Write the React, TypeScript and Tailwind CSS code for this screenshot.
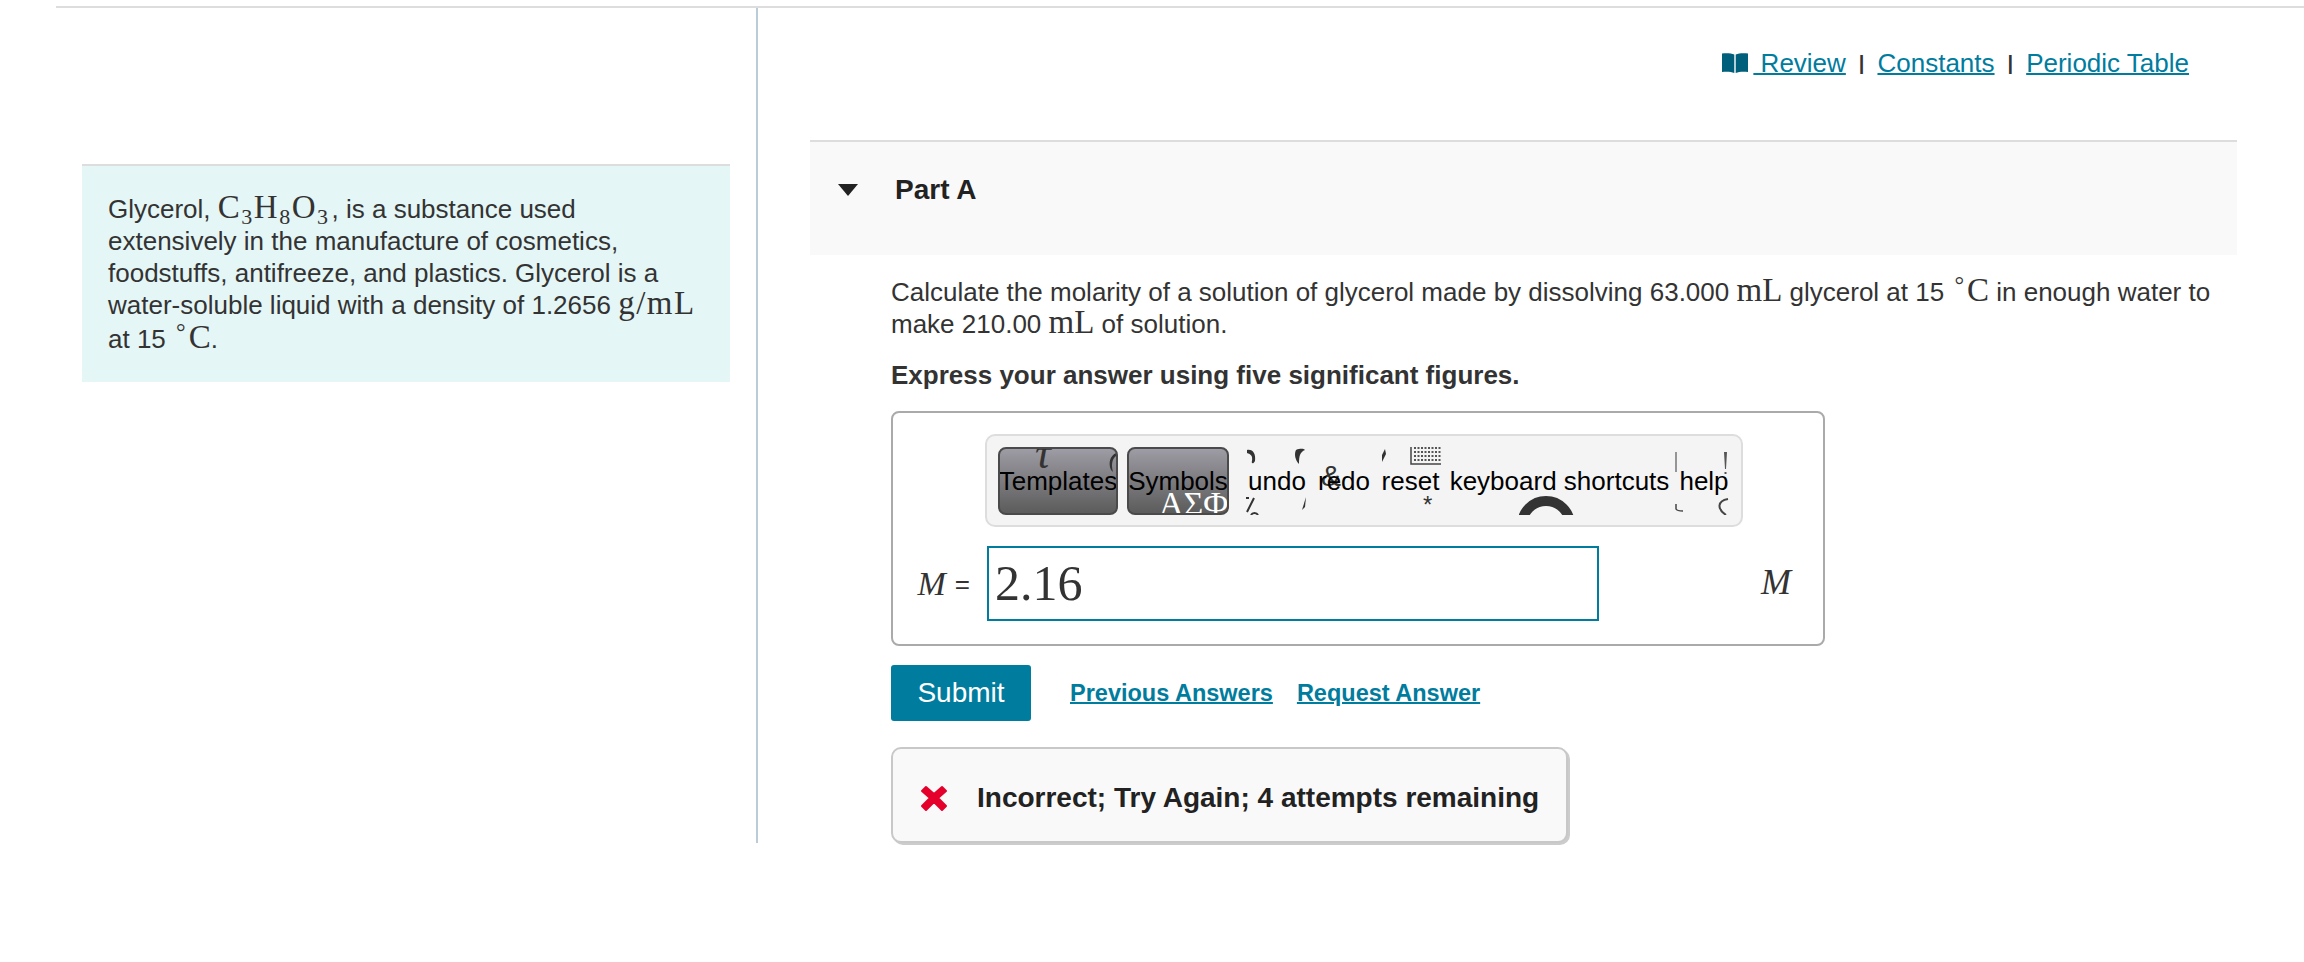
const serif = 'font-["Liberation_Serif",serif]';

function M({ children, wide }: { children: React.ReactNode; wide?: boolean }) {
  return <span className={`font-["Liberation_Serif",serif] text-[33px] leading-[24px] ${wide ? "tracking-[1.5px]" : ""}`}>{children}</span>;
}

function Sub({ children }: { children: React.ReactNode }) {
  return <span className="relative top-[6px] text-[22px] leading-none">{children}</span>;
}

function Deg() {
  return <span className="relative top-[-8px] mx-[3px] text-[24px] leading-none">°</span>;
}

function BookIcon() {
  return (
    <svg width="26" height="20" viewBox="0 0 26 20" className="mr-[5px]">
      <path d="M0 0.5C4 0 9 0 12.3 1.5V20C9 18.5 4 18.5 0 19Z" fill="#005f7a" />
      <path d="M26 0.5C22 0 17 0 13.7 1.5V20C17 18.5 22 18.5 26 19Z" fill="#005f7a" />
    </svg>
  );
}

function KeyboardIcon() {
  return (
    <svg width="32" height="18" viewBox="0 0 32 18" className="absolute left-[35px] top-0">
      <path d="M1 0V17H31" fill="none" stroke="#444" strokeWidth="1.5" />
      <path d="M4 1H31M4 5H31M4 9H31M4 13H31" stroke="#555" strokeWidth="2" strokeDasharray="2 1.5" />
    </svg>
  );
}

function ToolButton({ label, width, children }: { label: string; width: string; children: React.ReactNode }) {
  return (
    <div className={`relative flex h-[68px] ${width} items-center justify-center overflow-hidden rounded-[8px] border-2 border-[#4a4a4a] bg-gradient-to-b from-[#9e9ca4] to-[#5c5c5c] text-black`}>
      {children}
      <span className="relative">{label}</span>
    </div>
  );
}

function ToolItem({ label, width, children }: { label: string; width: string; children?: React.ReactNode }) {
  return (
    <div className={`relative flex h-[68px] ${width} shrink-0 items-center justify-center overflow-hidden text-black`}>
      {children}
      <span className="relative">{label}</span>
    </div>
  );
}

function Sep() {
  return <span className="mx-[13px] text-[20px] font-bold">|</span>;
}

export default function App() {
  return (
    <div className='min-h-[962px] bg-white pt-[6px] font-["Liberation_Sans",sans-serif] text-[26px] leading-[32px] text-[#333]'>
      <div className="ml-[56px] h-[2px] bg-[#dddddd]" />
      <div className="ml-[56px] flex">
        {/* Left column */}
        <div className="w-[702px] shrink-0 border-r-2 border-[#b9ccd8] pl-[26px] pt-[156px]">
          <div className="w-[648px] border-t-2 border-[#dddddd] bg-[#e5f6f6] px-[26px] pb-[29px] pt-[27px]">
            <p>
              Glycerol, <M wide>C<Sub>3</Sub>H<Sub>8</Sub>O<Sub>3</Sub></M><span className="ml-[2px]">,</span> is a substance used
              <br />
              extensively in the manufacture of cosmetics,
              <br />
              foodstuffs, antifreeze, and plastics. Glycerol is a
              <br />
              water-soluble liquid with a density of 1.2656 <M wide>g/mL</M>
              <br />
              <span className="relative top-[2px]">at 15 <M><Deg />C</M>.</span>
            </p>
          </div>
        </div>

        {/* Right column */}
        <div className="min-w-0 flex-1 pl-[52px] pr-[67px] pt-[39px]">
          <div className="mr-[48px] flex items-center justify-end">
            <BookIcon />
            <a className="text-[#007c9e] underline decoration-2">&nbsp;Review</a>
            <Sep />
            <a className="text-[#007c9e] underline decoration-2">Constants</a>
            <Sep />
            <a className="text-[#007c9e] underline decoration-2">Periodic Table</a>
          </div>

          <div className="mt-[61px] h-[115px] border-t-2 border-[#dddddd] bg-[#f9f9f9]">
            <div className="flex items-center pl-[28px] pt-[31px]">
              <svg width="20" height="12" viewBox="0 0 20 12">
                <path d="M0 0H20L10 12Z" fill="#222" />
              </svg>
              <h2 className="ml-[37px] text-[28px] font-bold leading-[34px] text-[#222]">Part A</h2>
            </div>
          </div>

          <div className="ml-[81px]">
            <p className="mt-[21px] whitespace-nowrap">
              Calculate the molarity of a solution of glycerol made by dissolving 63.000 <M>mL</M> glycerol at 15 <M><Deg />C</M> in enough water to
              <br />
              make 210.00 <M>mL</M> of solution.
            </p>
            <p className="mt-[19px] font-bold">Express your answer using five significant figures.</p>

            <div className="mt-[20px] h-[235px] w-[934px] rounded-[8px] border-2 border-[#aaaaaa] pt-[21px]">
              <div className="ml-[92px] flex h-[93px] w-[758px] items-center rounded-[10px] border-2 border-[#dddddd] bg-[#f4f4f4] pl-[11px]">
                <ToolButton label="Templates" width="w-[120px]">
                  <span className={`${serif} absolute left-[35px] top-[-17px] text-[44px] italic leading-none text-[#333]`}>τ</span>
                  <svg width="8" height="20" viewBox="0 0 8 20" className="absolute left-[108px] top-[4px]">
                    <path d="M8 0C2 3 0 10 3 17L5 19C3 12 4 6 8 3Z" fill="#333" />
                  </svg>
                </ToolButton>
                <div className="ml-[9px]" />
                <ToolButton label="Symbols" width="w-[102px]">
                  <span className={`${serif} absolute left-[30px] top-[38px] whitespace-nowrap text-[34px] leading-none text-white`}>ΑΣΦ</span>
                </ToolButton>
                <ToolItem label="undo" width="ml-[12px] w-[72px]">
                  <svg width="72" height="68" viewBox="0 0 72 68" className="absolute left-0 top-0">
                    <path d="M6 3C12 2 15 7 14 14C12 18 10 16 11 14C12 8 9 7 6 6Z" fill="#333" />
                    <path d="M55 3C60 1 63 2 64 3C59 5 58 9 58 17C54 13 53 7 55 3Z" fill="#333" />
                    <path d="M61 63L65 50L64 60Z" fill="#333" />
                    <path d="M6 65L13 51M5 51H8M10 68A4 4 0 0 1 17 68" fill="none" stroke="#333" strokeWidth="2" />
                  </svg>
                </ToolItem>
                <ToolItem label="redo" width="w-[62px]">
                  <span className="absolute left-[8px] top-[13px] text-[30px] text-[#333]">&amp;</span>
                </ToolItem>
                <ToolItem label="reset" width="w-[71px]">
                  <svg width="8" height="16" viewBox="0 0 8 16" className="absolute left-[5px] top-[1px]">
                    <path d="M5 1L6 6L2 14L2 7Z" fill="#333" />
                  </svg>
                  <span className="absolute left-[48px] top-[42px] text-[24px] text-[#333]">*</span>
                  <KeyboardIcon />
                </ToolItem>
                <ToolItem label="keyboard shortcuts" width="w-[227px]">
                  <svg width="60" height="22" viewBox="0 0 60 22" className="absolute bottom-0 left-[73px]">
                    <path d="M3 32A24 24 0 0 1 51 32" fill="none" stroke="#333" strokeWidth="10" />
                  </svg>
                </ToolItem>
                <ToolItem label="help" width="w-[62px]">
                  <svg width="62" height="68" viewBox="0 0 62 68" className="absolute -left-[3px] top-0">
                    <path d="M6 5V25" stroke="#555" strokeWidth="1.2" />
                    <path d="M54 5L55 22H56L57 5ZM54.5 25H56.5V27H54.5Z" fill="#555" />
                    <path d="M6 57V62C7 64 10 64 13 64" fill="none" stroke="#444" strokeWidth="1.5" />
                    <path d="M56 68C47 62 47 54 58 52" fill="none" stroke="#444" strokeWidth="2" />
                  </svg>
                </ToolItem>
              </div>

              <div className="mt-[19px] flex items-center">
                <div className="flex w-[94px] items-center justify-end pr-[17px]">
                  <span className={`${serif} mr-[9px] text-[34px] italic`}>M</span>
                  <span className="text-[26px]">=</span>
                </div>
                <div className={`${serif} flex h-[75px] w-[612px] items-center border-2 border-[#007c9e] pb-[2px] pl-[6px] text-[50px] leading-none`}>
                  2.16
                </div>
                <span className={`${serif} ml-auto mb-[3px] mr-[32px] text-[36px] italic`}>M</span>
              </div>
            </div>

            <div className="mt-[19px] flex items-center">
              <button className="h-[56px] w-[140px] rounded-[3px] bg-[#007c9e] text-[28px] text-white">Submit</button>
              <a className="ml-[39px] text-[23.5px] font-bold text-[#007c9e] underline decoration-2">Previous Answers</a>
              <a className="ml-[24px] text-[23.5px] font-bold text-[#007c9e] underline decoration-2">Request Answer</a>
            </div>

            <div className="mt-[26px] flex h-[96px] w-[677px] items-center rounded-[10px] border-2 border-[#c8c8c8] bg-[#f9f9f9] pl-[27px] pt-[6px] shadow-[2px_2px_0_#cccccc]">
              <svg width="28" height="28" viewBox="0 0 28 28">
                <path d="M6 3L14 10L22 3L26 7L18 14L26 22L22 26L14 18L6 26L2 22L10 14L2 7Z" fill="#e4002b" stroke="#e4002b" strokeWidth="2" strokeLinejoin="round" />
              </svg>
              <span className="ml-[29px] text-[28px] font-bold text-[#222]">Incorrect; Try Again; 4 attempts remaining</span>
            </div>
          </div>
        </div>
      </div>
    </div>
  );
}
